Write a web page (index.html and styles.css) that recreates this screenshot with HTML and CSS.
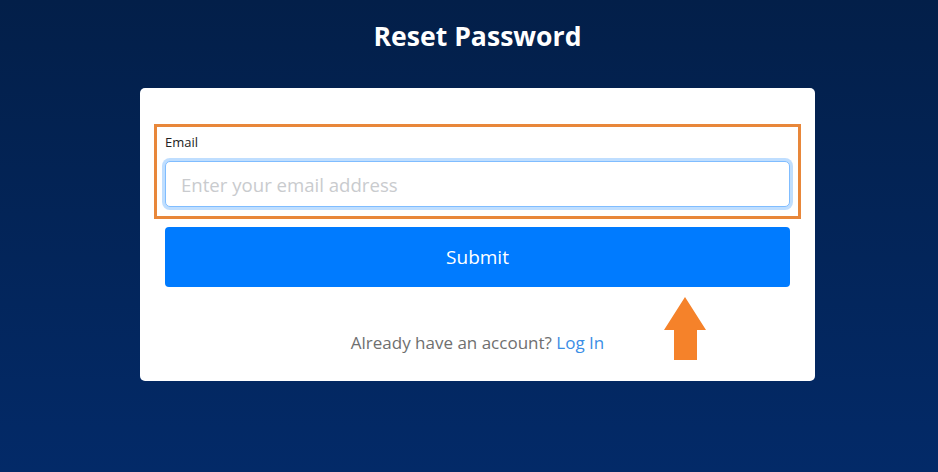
FILE: index.html
```html
<!DOCTYPE html>
<html lang="en">
<head>
<meta charset="utf-8">
<title>Reset Password</title>
<link rel="stylesheet" href="styles.css">
</head>
<body>
<main class="page">
  <h1 class="title">Reset Password</h1>
  <section class="card">
    <div class="field-highlight">
      <label class="label" for="email">Email</label>
      <input class="input" id="email" type="email" placeholder="Enter your email address">
    </div>
    <button class="submit" type="button">Submit</button>
    <p class="footer">Already have an account? <a class="link" href="#">Log In</a></p>
    <svg class="arrow" width="42" height="63" viewBox="0 0 42 63" aria-hidden="true">
      <polygon points="21,0 42,33 33,33 33,63 10,63 10,33 0,33" fill="#f5822a"/>
    </svg>
  </section>
</main>
</body>
</html>
```
FILE: styles.css
```css
* { box-sizing: border-box; }
html, body { margin: 0; height: 100%; }
body {
  background: linear-gradient(180deg, #031f49 0%, #032a68 100%);
  font-family: "Open Sans", "Noto Sans", sans-serif;
}
.page {
  display: flex;
  flex-direction: column;
  align-items: center;
  padding: 18px 0 0 17px;
}
.title {
  margin: 0 0 34px;
  font-size: 26.6px;
  line-height: 36px;
  font-weight: 700;
  color: #ffffff;
}
.card {
  position: relative;
  width: 675px;
  background: #ffffff;
  border-radius: 5px;
  padding: 36px 25px 26px;
  display: flex;
  flex-direction: column;
}
.field-highlight {
  margin: 0 -11px;
  padding: 6px 8px 9px;
  border: 3px solid #e8873a;
  display: flex;
  flex-direction: column;
}
.label {
  font-size: 13px;
  line-height: 18px;
  color: #222;
  margin-bottom: 10px;
}
.input {
  height: 46px;
  border: 1px solid #80bdff;
  border-radius: 5px;
  box-shadow: 0 0 0 3px rgba(0, 123, 255, 0.25);
  padding: 0 15px;
  font-family: inherit;
  font-size: 18.6px;
  color: #333;
  outline: none;
}
.input::placeholder { color: #c9cbce; }
.submit {
  margin-top: 8px;
  height: 60px;
  border: none;
  border-radius: 4px;
  background: #007bff;
  color: #ffffff;
  font-family: inherit;
  font-size: 19px;
}
.footer {
  margin: 44px 0 0;
  text-align: center;
  font-size: 17px;
  line-height: 24px;
  color: #6f6f6f;
}
.link { color: #3a8ee6; text-decoration: none; }
.arrow {
  position: absolute;
  left: 524px;
  top: 209px;
}
```
